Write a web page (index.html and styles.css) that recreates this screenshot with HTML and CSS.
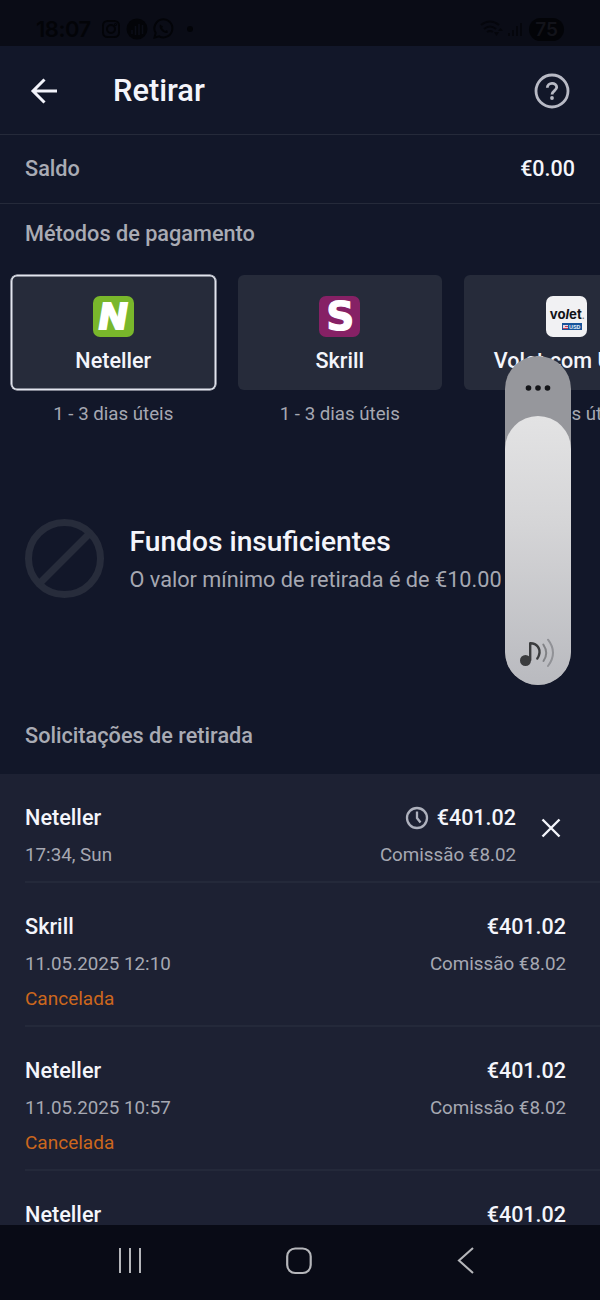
FILE: index.html
```html
<!DOCTYPE html>
<html lang="pt">
<head>
<meta charset="utf-8">
<title>Retirar</title>
<link rel="stylesheet" href="styles.css">
</head>
<body>
<div class="screen">
  <div class="status">
    <span class="clock">18:07</span>
    <svg class="status-apps" width="98" height="24" viewBox="0 0 98 24" fill="none" stroke="#030408" stroke-width="2">
      <rect x="3" y="4" width="16" height="16" rx="4.500"/><circle cx="11" cy="12" r="4"/><circle cx="15.500" cy="7.500" r="0.500"/>
      <circle cx="37" cy="12" r="10.500" fill="#030408" stroke="none"/>
      <path d="M32 13v4M35.500 9v9M39 7v11M42.500 8v9" stroke="#0b0d17" stroke-width="1.500"/>
      <path d="M54.500 20.500l1.200-4.500a9 9 0 1 1 3.500 3.300z"/>
      <path d="M60 7.500c-2 4 4 10 8 8l-1-2.500-2 1-3-3 1-1.500z" fill="#030408" stroke="none"/>
      <circle cx="90" cy="12" r="3" fill="#030408" stroke="none"/>
    </svg>
    <svg class="status-signal" width="46" height="24" viewBox="0 0 46 24" fill="none" stroke="#05060c" stroke-width="2">
      <path d="M2 8q9-7 18 0M5 12q6-5 12 0M8 15q3-2 6 0"/><path d="M15 15h5l-2.500 4zM19 14h5l-2.500-3z" fill="#05060c" stroke="none"/>
      <path d="M30 19v-3M34 19v-6M38 19V9M42 19V6"/>
    </svg>
    <span class="battery">75</span>
  </div>
  <header class="header">
    <svg width="28" height="28" viewBox="0 0 28 28" fill="none" stroke="#f2f3fa" stroke-width="3"><path d="M27 14H3M14.500 2.500L3 14L14.500 25.500"/></svg>
    <h1 class="title">Retirar</h1>
    <svg width="36" height="36" viewBox="0 0 36 36" fill="none" stroke="#b8bac5" stroke-width="2.800"><circle cx="18" cy="18" r="16"/><path d="M13.300 14.800C13.300 8.900 22.700 8.900 22.700 14.300C22.700 17.400 18 17.800 18 21.600"/><circle cx="18" cy="25" r="1.900" fill="#b8bac5" stroke="none"/></svg>
  </header>
  <div class="balance"><span class="label">Saldo</span><span class="value">€0.00</span></div>
  <h2 class="label methods-title">Métodos de pagamento</h2>
  <div class="methods">
    <div class="method">
      <div class="card selected"><div class="logo neteller"><span>N</span></div><div class="name">Neteller</div></div>
      <div class="days">1 - 3 dias úteis</div>
    </div>
    <div class="method">
      <div class="card"><div class="logo skrill"><span>S</span></div><div class="name">Skrill</div></div>
      <div class="days">1 - 3 dias úteis</div>
    </div>
    <div class="method">
      <div class="card"><div class="logo volet"><div class="volet-name">vo<i>l</i>et<small>.</small></div><div class="usd"><svg width="5" height="4" viewBox="0 0 5 4"><path fill="#e5d5df" d="M0 0h5v4H0z"/><path fill="#c33c55" d="M2 1h3v1H0v1h5v1H0V2h2z"/></svg>USD</div></div><div class="name">Volet.com USD</div></div>
      <div class="days">1 - 3 dias úteis</div>
    </div>
  </div>
  <section class="notice">
    <svg width="80" height="80" viewBox="0 0 80 80" fill="none" stroke="#272c3b" stroke-width="7"><circle cx="39.500" cy="39.500" r="36"/><path d="M14.500 64.500L64.500 14.500"/></svg>
    <div>
      <h2 class="notice-title">Fundos insuficientes</h2>
      <p class="notice-text">O valor mínimo de retirada é de €10.00</p>
    </div>
  </section>
  <h2 class="label requests-title">Solicitações de retirada</h2>
  <div class="requests">
    <div class="request pending">
      <div class="info"><div class="name">Neteller</div><div class="sub">17:34, Sun</div></div>
      <div class="amounts">
        <div class="name amount"><svg width="24" height="24" viewBox="0 0 24 24" fill="none" stroke="#aeb1bd" stroke-width="2.300"><circle cx="12" cy="12" r="10"/><path d="M12 5.500V12L15.500 16.500"/></svg>€401.02</div>
        <div class="sub">Comissão €8.02</div>
      </div>
      <svg class="close" width="20" height="20" viewBox="0 0 20 20" fill="none" stroke="#f4f5fb" stroke-width="2.400"><path d="M1.500 1.500l17 17M18.500 1.500l-17 17"/></svg>
    </div>
    <div class="request">
      <div class="info"><div class="name">Skrill</div><div class="sub">11.05.2025 12:10</div><div class="state">Cancelada</div></div>
      <div class="amounts"><div class="name amount">€401.02</div><div class="sub">Comissão €8.02</div></div>
    </div>
    <div class="request">
      <div class="info"><div class="name">Neteller</div><div class="sub">11.05.2025 10:57</div><div class="state">Cancelada</div></div>
      <div class="amounts"><div class="name amount">€401.02</div><div class="sub">Comissão €8.02</div></div>
    </div>
    <div class="request">
      <div class="info"><div class="name">Neteller</div></div>
      <div class="amounts"><div class="name amount">€401.02</div></div>
    </div>
  </div>
  <nav class="nav">
    <svg width="26" height="28" viewBox="0 0 26 28" stroke="#b5b6ba" stroke-width="2"><path d="M3 1v25M13 1v25M23 1v25"/></svg>
    <svg width="28" height="28" viewBox="0 0 28 28" fill="none" stroke="#b5b6ba" stroke-width="2.200"><rect x="0.500" y="1.500" width="23.500" height="24.500" rx="8" transform="translate(0.700)"/></svg>
    <svg width="18" height="28" viewBox="0 0 18 28" fill="none" stroke="#b5b6ba" stroke-width="2.100"><path d="M16 1L2 13.500L16 26"/></svg>
  </nav>
  <div class="volume">
    <svg class="dots" width="26" height="6" viewBox="0 0 26 6" fill="#141519"><circle cx="3.500" cy="3" r="2.800"/><circle cx="13" cy="3" r="2.800"/><circle cx="22.500" cy="3" r="2.800"/></svg>
    <div class="level">
      <svg width="36" height="30" viewBox="0 0 36 30" fill="none" stroke-linecap="round"><circle cx="5.500" cy="22.500" r="5.500" fill="#3b3c3e"/><path d="M10.200 22V5.200C17 5 21 11 19 17Q18.500 19 17.300 20.500" stroke="#3b3c3e" stroke-width="2.400" stroke-linejoin="round"/><path d="M23.300 6.500Q29 15 23.500 23" stroke="#818286" stroke-width="2"/><path d="M28 1.700Q38 14.500 28 28" stroke="#919297" stroke-width="2"/></svg>
    </div>
  </div>
</div>
</body>
</html>
```
FILE: styles.css
```css
* { box-sizing: border-box; }
body, h1, h2, p { margin: 0; }
body { background: #121729; font-family: Roboto, "Liberation Sans", sans-serif; color: #f4f5fb; }
svg { display: block; flex: none; }
.screen { position: relative; width: 600px; height: 1300px; overflow: hidden; display: flex; flex-direction: column; }
.status { flex: none; height: 46px; background: #0a0c16; display: flex; align-items: center; padding: 12px 36px 0; color: #030408; }
.clock { font: 600 22px/24px Inter, sans-serif; width: 64px; letter-spacing: -0.5px; }
.status-signal { margin-left: auto; margin-right: 4px; }
.battery { width: 35px; height: 23px; border-radius: 12px; background: #030408; color: #12131a; font: 600 19px/23px Inter, sans-serif; text-align: center; }
.header { flex: none; height: 89px; border-bottom: 1px solid #252a3a; display: flex; align-items: center; padding: 1px 30.500px 0 29.500px; }
.title { font-size: 30.800px; line-height: 36px; font-weight: 500; margin: 0 auto 0 55.500px; }
.balance { flex: none; height: 69px; border-bottom: 1px solid #252a3a; display: flex; align-items: center; justify-content: space-between; padding: 0 25px; }
.label { font-size: 21.700px; line-height: 28px; font-weight: 500; color: #a9abb4; }
.value, .name { font-size: 21.700px; line-height: 28px; font-weight: 500; }
.value, .amount { font-size: 21.500px; }
.methods-title { padding: 16px 25px 0; height: 71px; flex: none; }
.methods { display: flex; gap: 22px; padding-left: 11px; flex: none; height: 153px; }
.method { flex: none; width: 204.500px; text-align: center; }
.card { height: 115px; border-radius: 6px; background: #262b3a; display: flex; flex-direction: column; align-items: center; padding-top: 21px; }
.card .name { white-space: nowrap; font-size: 21.600px; }
.selected { box-shadow: 0 0 0 0.500px #eef0f8, inset 0 0 0 1.500px #e2e5ee; }
.logo { width: 41px; height: 41px; border-radius: 7px; margin-bottom: 9.500px; }
.neteller { background: #79b72b; }
.neteller span { display: block; font: italic 800 36px/41px Inter, sans-serif; color: #fff; -webkit-text-stroke: 1.800px #fff; text-indent: -1px; }
.skrill { background: #862165; }
.skrill span { display: block; font: 700 39px/42px "DejaVu Sans", sans-serif; color: #fff; -webkit-text-stroke: 1.200px #fff; text-indent: 1px; }
.volet { background: #f1f1f3; padding: 11px 0 0 4px; color: #111318; text-align: left; }
.volet-name { font: 700 13.200px/14px Inter, sans-serif; letter-spacing: 0; white-space: nowrap; }
.volet-name small { font-size: 9px; color: #777; }
.usd { width: 20px; height: 7px; margin-left: 12px; background: #17539a; color: #dce6f4; display: flex; gap: 1px; align-items: center; justify-content: center; font: 700 6px/7px Roboto, sans-serif; }
.days { font-size: 18.700px; line-height: 24px; margin-top: 12px; color: #a6a8b2; }
.notice { flex: none; height: 260px; display: flex; align-items: flex-start; gap: 24.500px; padding: 90.500px 25px 0; }
.notice-title { font-size: 28.200px; line-height: 34px; font-weight: 500; margin-top: 6.500px; }
.notice-text { font-size: 21.700px; line-height: 28px; margin-top: 7px; color: #a6a8b2; white-space: nowrap; }
.requests-title { flex: none; height: 86px; padding: 34px 25px 0; }
.requests { flex: 1; min-height: 0; overflow: hidden; background: #1d2133; padding-left: 25px; }
.request { height: 144px; display: flex; justify-content: space-between; padding: 30px 34px 0 0; border-bottom: 2px solid #24293a; }
.pending { height: 109px; }
.pending .amounts { margin-left: auto; }
.pending .close { margin: 14px 5px 0 25px; }
.amount { display: flex; gap: 8px; align-items: center; justify-content: flex-end; }
.sub, .state { font-size: 18.800px; line-height: 28px; margin-top: 9px; color: #a6a8b2; }
.state { font-size: 19px; margin-top: 7px; color: #cd671d; }
.nav { flex: none; height: 75px; background: #090b16; display: flex; align-items: center; justify-content: space-between; padding: 0 125px 4px 117px; }
.volume { position: absolute; left: 505px; top: 356px; width: 66px; height: 329px; border-radius: 33px; overflow: hidden; background: #96979c; display: flex; flex-direction: column; align-items: center; padding-top: 29px; }
.level { margin-top: 25px; width: 66px; flex: 1; border-radius: 33px; background: linear-gradient(#e3e3e4, #d5d5d7 40%, #b9babf); display: flex; align-items: flex-end; justify-content: center; padding-bottom: 17px; }
```
